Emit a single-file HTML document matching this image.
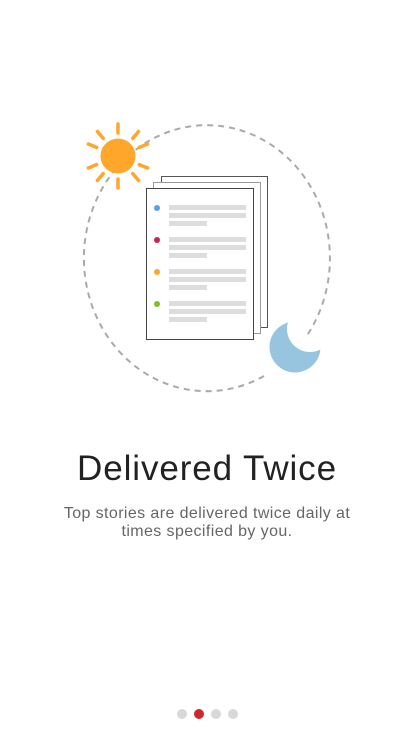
<!DOCTYPE html>
<html><head><meta charset="utf-8"><style>
html,body{margin:0;padding:0;background:#fff;width:414px;height:736px;overflow:hidden;font-family:"Liberation Sans",sans-serif}
.t{position:absolute;left:0;width:414px;text-align:center}
#h{top:449px;font-size:35px;font-weight:300;color:#222;letter-spacing:0.9px}
#s{top:505px;font-size:16px;line-height:18px;color:#666;letter-spacing:0.4px}
</style></head><body>
<svg width="414" height="736" style="position:absolute;left:0;top:0">
<path d="M 264 376 A 123 133 0 1 1 306 337" fill="none" stroke="#aaa" stroke-width="2" stroke-dasharray="6 5"/>
<g stroke="#ffa62b" stroke-width="3.5" stroke-linecap="round">
<g transform="translate(118,156)">
<line x1="0" y1="-23" x2="0" y2="-32"/><line x1="0" y1="23" x2="0" y2="32"/>
<line x1="-23" y1="0" x2="-32" y2="0" transform="rotate(22)"/><line x1="23" y1="0" x2="32" y2="0" transform="rotate(22)"/>
<line x1="-23" y1="0" x2="-32" y2="0" transform="rotate(-22)"/><line x1="23" y1="0" x2="32" y2="0" transform="rotate(-22)"/>
<line x1="0" y1="-23" x2="0" y2="-32" transform="rotate(40)"/><line x1="0" y1="-23" x2="0" y2="-32" transform="rotate(-40)"/>
<line x1="0" y1="23" x2="0" y2="32" transform="rotate(40)"/><line x1="0" y1="23" x2="0" y2="32" transform="rotate(-40)"/>
</g></g>
<circle cx="118" cy="156" r="17.5" fill="#ffa62b"/>
<rect x="161.5" y="176.5" width="106" height="151" fill="#fff" stroke="#555"/>
<rect x="153.5" y="182.5" width="107" height="151" fill="#fff" stroke="#999"/>
<rect x="146.5" y="188.5" width="107" height="151" fill="#fff" stroke="#444"/>
<g fill="#ddd">
<rect x="169" y="205" width="77" height="5"/><rect x="169" y="213" width="77" height="5"/><rect x="169" y="221" width="38" height="5"/>
<rect x="169" y="237" width="77" height="5"/><rect x="169" y="245" width="77" height="5"/><rect x="169" y="253" width="38" height="5"/>
<rect x="169" y="269" width="77" height="5"/><rect x="169" y="277" width="77" height="5"/><rect x="169" y="285" width="38" height="5"/>
<rect x="169" y="301" width="77" height="5"/><rect x="169" y="309" width="77" height="5"/><rect x="169" y="317" width="38" height="5"/>
</g>
<circle cx="157" cy="208" r="3" fill="#5b9cf5"/>
<circle cx="157" cy="240" r="3" fill="#c8254f"/>
<circle cx="157" cy="272" r="3" fill="#ffa62b"/>
<circle cx="157" cy="304" r="3" fill="#7cc02a"/>
<mask id="m"><rect width="414" height="736" fill="#fff"/><circle cx="310" cy="329" r="23" fill="#000"/></mask>
<circle cx="295" cy="347" r="25.5" fill="#97c4df" mask="url(#m)"/>
<circle cx="182" cy="714" r="5" fill="#d8d8d8"/>
<circle cx="199" cy="714" r="5" fill="#d0282a"/>
<circle cx="216" cy="714" r="5" fill="#d8d8d8"/>
<circle cx="233" cy="714" r="5" fill="#d8d8d8"/>
</svg>
<div class="t" id="h">Delivered Twice</div>
<div class="t" id="s">Top stories are delivered twice daily at<br>times specified by you.</div>
</body></html>
